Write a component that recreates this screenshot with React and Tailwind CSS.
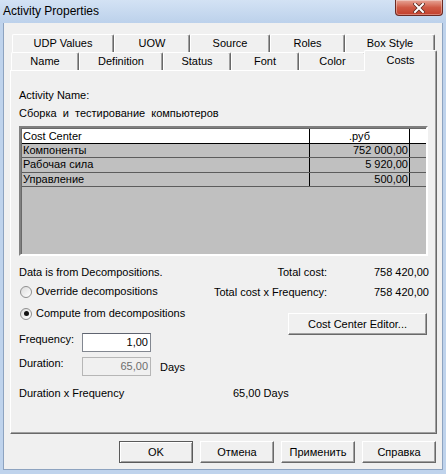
import React from "react";

const tabsBack = [
  { label: "UDP Values", w: 102 },
  { label: "UOW", w: 76 },
  { label: "Source", w: 80 },
  { label: "Roles", w: 75 },
  { label: "Box Style", w: 90 },
];

const tabsFront = [
  { label: "Name", w: 68 },
  { label: "Definition", w: 84 },
  { label: "Status", w: 68 },
  { label: "Font", w: 68 },
  { label: "Color", w: 67 },
];

const costRows = [
  { name: "Компоненты", value: "752 000,00", h: 14 },
  { name: "Рабочая сила", value: "5 920,00", h: 15 },
  { name: "Управление", value: "500,00", h: 14 },
];

function Tab({ label, w }) {
  return (
    <div
      style={{ width: w }}
      className="h-full shrink-0 flex items-center justify-center border-l border-t border-r border-l-white border-t-white border-r-[#696969] rounded-tl-[2px] rounded-tr-[2px] shadow-[inset_-1px_0_#a0a0a0] bg-[#f0f0f0]"
    >
      {label}
    </div>
  );
}

function Radio({ checked, label }) {
  return (
    <div className="flex items-center h-[13px]">
      <div className="ml-[1px] w-[12px] h-[12px] rounded-full border border-[#8f8f8f] bg-gradient-to-br from-[#dcdcdc] to-white flex items-center justify-center">
        {checked && <div className="w-[5px] h-[5px] rounded-full bg-[#111]" />}
      </div>
      <span className="ml-[4px]">{label}</span>
    </div>
  );
}

function Button({ children, w, primary }) {
  return (
    <div
      style={{ width: w }}
      className={
        "h-[22px] shrink-0 flex items-center justify-center bg-[#f0f0f0] " +
        (primary
          ? "border border-[#5a5a5a] shadow-[inset_1px_1px_white,inset_-1px_-1px_#a0a0a0]"
          : "border border-t-white border-l-white border-r-[#696969] border-b-[#696969] shadow-[inset_-1px_-1px_#a0a0a0]")
      }
    >
      {children}
    </div>
  );
}

export default function App() {
  return (
    <div className="w-[446px] h-[474px] bg-[#bfd3ec] flex flex-col font-['Liberation_Sans',Arial,sans-serif] text-[11px] leading-[13px] text-black overflow-hidden">
      {/* title bar */}
      <div className="h-[23px] shrink-0 flex items-start justify-between bg-gradient-to-b from-[#d3e2f4] to-[#bcd1eb]">
        <div className="pl-[3px] pt-[4px] text-[12px] leading-[14px]">Activity Properties</div>
        <div className="mr-[3px] w-[48px] h-[16px] rounded-b-[4px] border border-t-0 border-[#6b2a22] bg-gradient-to-b from-[#e6a597] via-[#cf5a45] to-[#c23e2b] flex items-center justify-center shadow-[inset_0_0_0_1px_rgba(255,255,255,0.35)]">
          <svg width="12" height="10" viewBox="0 0 12 10">
            <path d="M2 1 L10 9 M10 1 L2 9" stroke="#5a2a22" strokeWidth="3.6" strokeLinecap="square" />
            <path d="M2 1 L10 9 M10 1 L2 9" stroke="#ffffff" strokeWidth="2" strokeLinecap="square" />
          </svg>
        </div>
      </div>

      {/* client area */}
      <div className="ml-[3px] w-[440px] h-[447px] bg-[#f0f0f0] border-l border-r border-b border-[#8da3c0] flex flex-col">
        {/* tabs */}
        <div className="mt-[11px] ml-[8px] h-[18px] flex">
          {tabsBack.map((t) => (
            <Tab key={t.label} label={t.label} w={t.w} />
          ))}
        </div>
        <div className="ml-[7px] h-[18px] flex items-end">
          {tabsFront.map((t) => (
            <Tab key={t.label} label={t.label} w={t.w} />
          ))}
          <div className="relative z-10 -ml-[2px] mb-[-1px] w-[73px] h-[21px] shrink-0 flex items-start justify-center pt-[3px] bg-[#f0f0f0] border-l border-t border-r border-l-white border-t-white border-r-[#696969] rounded-tl-[2px] rounded-tr-[2px] shadow-[inset_-1px_0_#a0a0a0]">
            Costs
          </div>
        </div>

        {/* tab panel */}
        <div className="ml-[6px] w-[427px] h-[364px] shrink-0 border border-t-white border-l-white border-r-[#696969] border-b-[#696969] shadow-[inset_-1px_-1px_#a0a0a0] pl-[8px] flex flex-col">
          <div className="mt-[18px]">Activity Name:</div>
          <div className="mt-[5px] whitespace-pre">Сборка  и  тестирование  компьютеров</div>

          {/* cost table */}
          <div className="mt-[6px] w-[409px] h-[130px] shrink-0 border-2 border-t-[#808080] border-l-[#808080] border-r-white border-b-white shadow-[inset_1px_1px_#696969] bg-[#c0c0c0] pl-[1px] pt-[1px]">
            <div className="flex h-[15px] bg-white border-b border-black">
              <div className="w-[288px] border-r border-black pl-[1px] leading-[14px]">Cost Center</div>
              <div className="w-[100px] border-r border-black text-center leading-[14px]">.руб</div>
            </div>
            {costRows.map((r) => (
              <div key={r.name} style={{ height: r.h }} className="flex border-b border-[#5c5c5c]">
                <div className="w-[288px] border-r border-black pl-[1px] leading-[13px]">{r.name}</div>
                <div className="w-[100px] border-r border-black text-right pr-[1px] leading-[13px]">{r.value}</div>
              </div>
            ))}
          </div>

          {/* totals and options */}
          <div className="mt-[10px] w-[410px] flex">
            <div className="flex-1 flex flex-col">
              <div className="h-[13px]">Data is from Decompositions.</div>
              <div className="mt-[6px]">
                <Radio label="Override decompositions" />
              </div>
              <div className="mt-[9px]">
                <Radio checked label="Compute from decompositions" />
              </div>
              <div className="mt-[13px] flex items-center h-[19px]">
                <div className="w-[63px] -mt-[6px]">Frequency:</div>
                <div className="w-[69px] h-[19px] bg-white border border-[#828790] border-t-[#5f6470] text-right pr-[2px] leading-[17px]">
                  1,00
                </div>
              </div>
              <div className="mt-[5px] flex items-center h-[19px]">
                <div className="w-[63px] -mt-[6px]">Duration:</div>
                <div className="w-[69px] h-[19px] bg-[#f0f0f0] border border-[#b6b6b6] text-right pr-[2px] leading-[17px] text-[#6d6d6d]">
                  65,00
                </div>
                <div className="ml-[9px] mt-[1px]">Days</div>
              </div>
            </div>
            <div className="w-[230px] flex flex-col items-end">
              <div className="flex h-[13px]">
                <div className="text-right">Total cost:</div>
                <div className="w-[102px] text-right">758 420,00</div>
              </div>
              <div className="mt-[7px] flex h-[13px]">
                <div className="text-right">Total cost x Frequency:</div>
                <div className="w-[102px] text-right">758 420,00</div>
              </div>
              <div className="mt-[14px] mr-[2px]">
                <Button w={139}>Cost Center Editor...</Button>
              </div>
            </div>
          </div>

          <div className="mt-[11px] flex">
            <div className="w-[214px]">Duration x Frequency</div>
            <div>65,00 Days</div>
          </div>
        </div>

        {/* dialog buttons */}
        <div className="mt-[7px] pr-[6px] flex justify-end gap-[7px]">
          <Button w={74} primary>OK</Button>
          <Button w={74}>Отмена</Button>
          <Button w={74}>Применить</Button>
          <Button w={74}>Справка</Button>
        </div>
      </div>
    </div>
  );
}
